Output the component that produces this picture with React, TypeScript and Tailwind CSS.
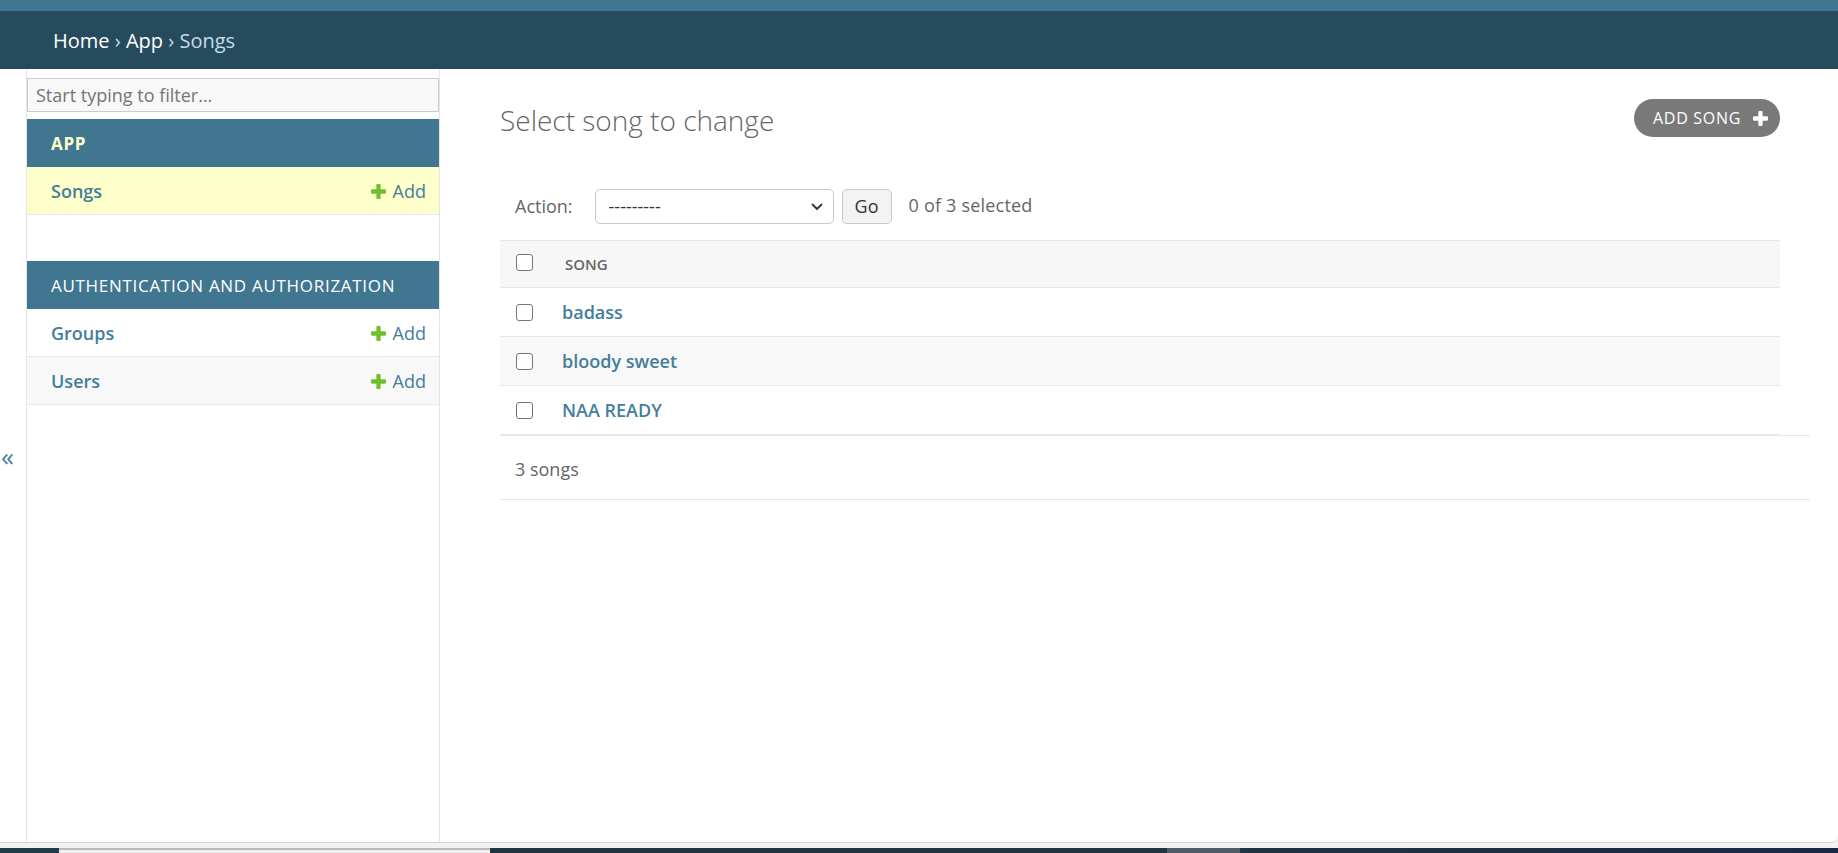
import React from "react";

function Plus({ className }: { className?: string }) {
  return (
    <svg viewBox="0 0 14 14" className={className} fill="currentColor">
      <rect x="5" y="0" width="4" height="14" rx="1" />
      <rect x="0" y="5" width="14" height="4" rx="1" />
    </svg>
  );
}

function Chevron() {
  return (
    <svg viewBox="0 0 12 8" className="h-[8px] w-[12px]" fill="none" stroke="#333" strokeWidth="1.8" strokeLinecap="round" strokeLinejoin="round">
      <path d="M1.5 1.5l4.5 4.5 4.5-4.5" />
    </svg>
  );
}

function Checkbox({ className = "" }: { className?: string }) {
  return <div className={"h-[17px] w-[17px] rounded-[3px] border-[1.5px] border-[#767676] bg-white " + className} />;
}

function NavRow({ name, bg }: { name: string; bg: string }) {
  return (
    <div className={"flex h-[48px] items-center justify-between border-b border-[#e8e8e8] pl-[24px] pr-[13px] pt-[2px] " + bg}>
      <span className="text-[18px] font-semibold text-[#447e9b]">{name}</span>
      <span className="flex items-center text-[18px] text-[#447e9b]">
        <Plus className="mr-[7px] h-[15px] w-[15px] text-[#70bf2b]" />
        Add
      </span>
    </div>
  );
}

function SongRow({ name, bg }: { name: string; bg: string }) {
  return (
    <div className={"flex h-[49px] items-center border-b border-[#e8e8e8] " + bg}>
      <div className="w-[49px] shrink-0 pl-[16px]">
        <Checkbox />
      </div>
      <span className="pl-[13px] text-[18px] font-semibold text-[#447e9b]">{name}</span>
    </div>
  );
}

export default function App() {
  return (
    <div className="h-[853px] w-full overflow-hidden bg-[#f2f2f2] font-['Open_Sans','Noto_Sans',sans-serif] text-[#333]">
      <div className="flex h-[843px] flex-col overflow-hidden rounded-br-[8px] border-b border-[#d8d8d8] bg-white">
        <div className="h-[11px] shrink-0 bg-[#417690]" />
        <div className="flex h-[58px] shrink-0 items-center bg-[#264b5d] pl-[53px] pt-[2px] text-[20px] leading-[28px] text-[#c4dce8]">
          <span className="text-white">Home</span>
          <span className="whitespace-pre">{" › "}</span>
          <span className="text-white">App</span>
          <span className="whitespace-pre">{" › Songs"}</span>
        </div>

        <div className="flex min-h-0 flex-1">
          <div className="flex w-[27px] shrink-0 items-center border-r border-[#e5e5e5] pl-[1px]">
            <span className="text-[26px] leading-none text-[#447e9b]">«</span>
          </div>

          <nav className="w-[413px] shrink-0 border-r border-[#e5e5e5] pt-[9px]">
            <div className="flex h-[34px] items-center border border-[#cccccc] bg-[#f8f8f8] pl-[8px] text-[18px] text-[#757575]">
              Start typing to filter...
            </div>
            <div className="mt-[7px]">
              <div className="flex h-[48px] items-center bg-[#417690] pl-[24px] pt-[1px] text-[17px] font-bold tracking-[0.7px] text-[#ffffcc]">
                APP
              </div>
              <NavRow name="Songs" bg="bg-[#ffffcc]" />
            </div>
            <div className="mt-[46px]">
              <div className="flex h-[48px] items-center bg-[#417690] pl-[24px] pt-[1px] text-[17px] tracking-[0.7px] text-white">
                AUTHENTICATION AND AUTHORIZATION
              </div>
              <NavRow name="Groups" bg="bg-white" />
              <NavRow name="Users" bg="bg-[#f8f8f8]" />
            </div>
          </nav>

          <main className="min-w-0 flex-1 pl-[60px] pr-[58px] pt-[30px]">
            <div className="flex items-start justify-between">
              <h1 className="mt-[2px] text-[28px] font-light leading-[38px] text-[#666]">Select song to change</h1>
              <div className="flex h-[38px] items-center rounded-full bg-[#797979] pl-[19px] pr-[12px] text-[16px] uppercase tracking-[0.7px] text-white">
                ADD SONG
                <Plus className="ml-[12px] h-[15px] w-[15px]" />
              </div>
            </div>

            <div className="mt-[50px] flex h-[35px] items-center pl-[15px] text-[18px]">
              <span className="text-[#666]">Action:</span>
              <div className="ml-[22px] flex h-[35px] w-[239px] items-center justify-between rounded-[5px] border border-[#c8c8c8] bg-white pl-[13px] pr-[10px] text-[#333]">
                <span>---------</span>
                <Chevron />
              </div>
              <div className="ml-[8px] flex h-[35px] w-[50px] items-center justify-center rounded-[5px] border border-[#c8c8c8] bg-[#f3f3f3] text-[#333]">
                Go
              </div>
              <span className="-mt-[3px] ml-[17px] tracking-[0.2px] text-[#666]">0 of 3 selected</span>
            </div>

            <div className="mt-[16px]">
              <div className="flex h-[48px] items-center border-y border-[#e8e8e8] bg-[#f7f7f7]">
                <div className="w-[49px] shrink-0 pl-[16px]">
                  <Checkbox className="-mt-[4px]" />
                </div>
                <span className="pl-[16px] text-[15px] font-semibold text-[#666]">SONG</span>
              </div>
              <SongRow name="badass" bg="bg-white" />
              <SongRow name="bloody sweet" bg="bg-[#f8f8f8]" />
              <SongRow name="NAA READY" bg="bg-white" />
            </div>
            <div className="-mr-[30px] flex h-[65px] items-center border-y border-[#e8e8e8] pl-[15px] pt-[3px] text-[18px] text-[#666]">
              3 songs
            </div>
          </main>
        </div>
      </div>
      <div className="h-[5px]" />
      <div className="flex h-[5px]">
        <div className="w-[59px] bg-[#1e3b47]" />
        <div className="w-[431px] border-t-2 border-[#b9b9b9] bg-[#f0f0f0]" />
        <div className="w-[677px] bg-[#1f3540]" />
        <div className="w-[73px] bg-[#4f5d69]" />
        <div className="flex-1 bg-gradient-to-r from-[#1f3344] to-[#1b2845]" />
      </div>
    </div>
  );
}
